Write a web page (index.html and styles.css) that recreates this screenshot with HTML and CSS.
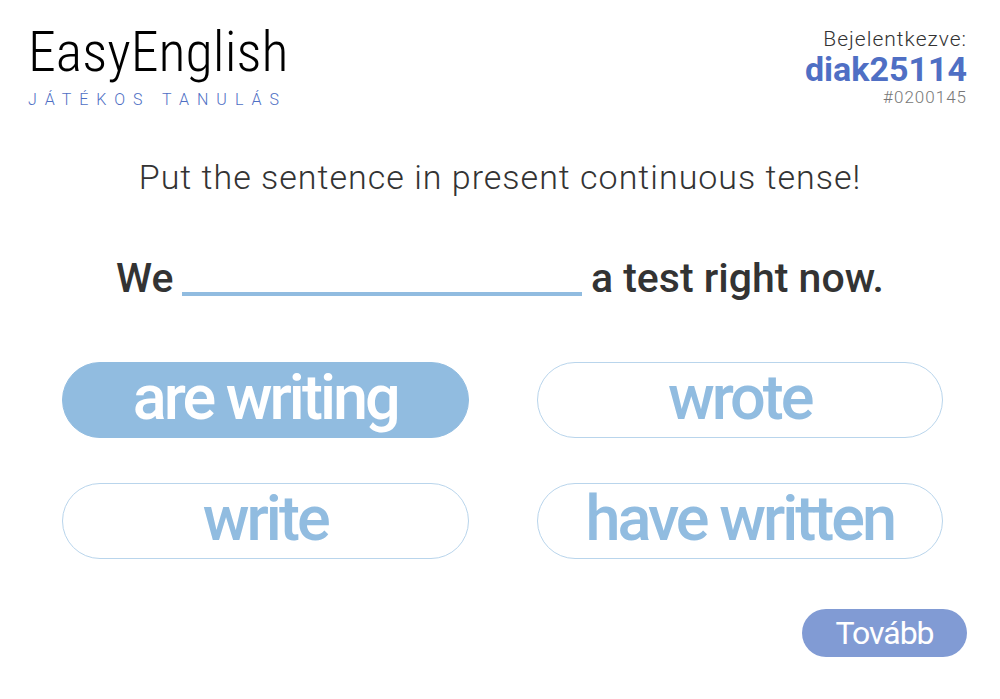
FILE: index.html
```
<!DOCTYPE html>
<html lang="hu">
<head>
<meta charset="utf-8">
<title>EasyEnglish</title>
<link rel="stylesheet" href="styles.css">
</head>
<body>
<header class="top">
  <div class="brand">
    <div class="brand-name">EasyEnglish</div>
    <div class="brand-sub">JÁTÉKOS TANULÁS</div>
  </div>
  <div class="user">
    <div class="user-label">Bejelentkezve:</div>
    <div class="user-name">diak25114</div>
    <div class="user-id">#0200145</div>
  </div>
</header>
<main>
  <h1 class="task">Put the sentence in present continuous tense!</h1>
  <p class="sentence"><span>We</span><span class="blank"></span><span>a test right now.</span></p>
  <div class="answers">
    <button type="button" class="answer selected">are writing</button>
    <button type="button" class="answer">wrote</button>
    <button type="button" class="answer">write</button>
    <button type="button" class="answer">have written</button>
  </div>
</main>
<footer class="actions"><button type="button" class="next">Tovább</button></footer>
</body>
</html>
```
FILE: styles.css
```
* { box-sizing: border-box; }
body {
  margin: 0;
  background: #fff;
  color: #333;
  font-family: Roboto, "Liberation Sans", sans-serif;
}
.top {
  display: flex;
  justify-content: space-between;
  padding: 22px 33px 0 28px;
}
.brand-name {
  font-family: "Roboto Condensed", Roboto, sans-serif;
  font-size: 56px;
  line-height: 60px;
  font-weight: 300;
  color: #000;
}
.brand-sub {
  margin-top: 8px;
  font-size: 16px;
  line-height: 20px;
  font-weight: 300;
  letter-spacing: 8px;
  color: #4f6fc4;
}
.user { text-align: right; padding-top: 4px; }
.user-label { font-size: 21px; line-height: 26px; font-weight: 300; letter-spacing: 1px; }
.user-name { font-size: 34px; line-height: 35px; font-weight: 700; color: #4f6fc4; }
.user-id { font-size: 17px; line-height: 21px; font-weight: 300; letter-spacing: 1px; color: #777; }
.task {
  margin: 46px 0 0;
  text-align: center;
  font-size: 34px;
  line-height: 42px;
  font-weight: 300;
  letter-spacing: 1px;
}
.sentence {
  display: flex;
  justify-content: center;
  gap: 9px;
  margin: 56px 116px 0;
  font-size: 41px;
  line-height: 48px;
  font-weight: 500;
  white-space: nowrap;
}
.blank { flex: 1; height: 42px; border-bottom: 4px solid #91bce0; }
.answers {
  display: grid;
  grid-template-columns: 1fr 1fr;
  gap: 45px 68px;
  margin: 60px 57px 0 62px;
}
.answer {
  height: 76px;
  padding: 0 0 4px;
  border: 1px solid #b9d5ec;
  border-radius: 38px;
  background: #fff;
  color: #91bce0;
  font: 500 63px/68px Roboto, sans-serif;
  letter-spacing: -3px;
}
.selected { background: #91bce0; border-color: #91bce0; color: #fff; }
.actions { display: flex; justify-content: flex-end; padding: 50px 33px 40px; }
.next {
  width: 165px;
  height: 48px;
  padding: 0;
  border: 0;
  border-radius: 24px;
  background: #819bd4;
  color: #fff;
  font: 400 32px/48px Roboto, sans-serif;
  letter-spacing: -1px;
}
```
